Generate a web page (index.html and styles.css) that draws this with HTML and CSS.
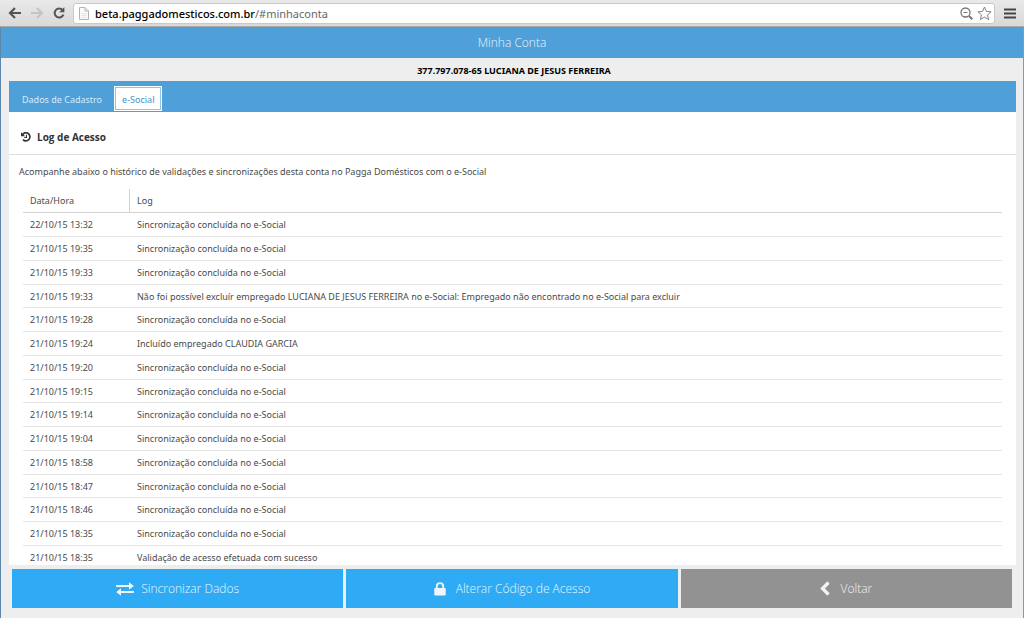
FILE: index.html
```html
<!DOCTYPE html>
<html lang="pt-BR">
<head>
<meta charset="utf-8">
<title>Minha Conta</title>
<link rel="stylesheet" href="styles.css">
</head>
<body>
<div class="browser">
  <nav class="toolbar" aria-label="Navegador">
    <button class="tool back" aria-label="Voltar página"><svg width="14" height="12" viewBox="0 0 14 12"><path d="M13 6H2M7 1L2 6l5 5" fill="none" stroke="currentColor" stroke-width="2.2"/></svg></button>
    <button class="tool forward" aria-label="Avançar página" disabled><svg width="14" height="12" viewBox="0 0 14 12"><path d="M1 6h11M7 1l5 5-5 5" fill="none" stroke="currentColor" stroke-width="2.2"/></svg></button>
    <button class="tool reload" aria-label="Recarregar"><svg width="12" height="12" viewBox="0 0 12 12"><path d="M9.6 3A4.5 4.5 0 1 0 10.4 7.6" fill="none" stroke="currentColor" stroke-width="2"/><path d="M11.4 0v5.2H6.2z" fill="currentColor"/></svg></button>
    <div class="address">
      <svg class="page-icon" width="10" height="13" viewBox="0 0 10 13"><path d="M.5.5h5.500l3.500 3.500v8.500h-9zM6 .5V4h3.500" fill="#fafafa" stroke="#b4b4b4"/><path d="M2.500 6.500h5M2.500 8.500h5M2.500 10.500h5" stroke="#e4e4e4"/></svg>
      <a class="url" href="#minhaconta"><span class="host">beta.paggadomesticos.com.br</span>/#minhaconta</a>
      <button class="tool small" aria-label="Zoom"><svg width="13" height="13" viewBox="0 0 13 13" fill="none" stroke="#777"><circle cx="5.500" cy="5.500" r="4.500" stroke-width="1.300"/><path d="M3.500 5.500h4"/><path d="M9 9l3.300 3.300" stroke-width="2"/></svg></button>
      <button class="tool small" aria-label="Favorito"><svg width="15" height="15" viewBox="0 0 15 15"><path d="M7.500 1l1.900 4.400 4.700.4-3.600 3.100 1.100 4.700-4.100-2.500-4.100 2.500 1.100-4.700L.9 5.800l4.700-.4z" fill="#fff" stroke="#858585"/></svg></button>
    </div>
    <button class="tool menu" aria-label="Menu"><svg width="12" height="11" viewBox="0 0 12 11"><path d="M0 1.500h12M0 5.500h12M0 9.500h12" stroke="currentColor" stroke-width="2"/></svg></button>
  </nav>
  <div class="app">
    <header class="title">Minha Conta</header>
    <div class="account">377.797.078-65 LUCIANA DE JESUS FERREIRA</div>
    <main class="panel">
      <div class="tabs" role="tablist">
        <button class="tab" role="tab" aria-selected="false">Dados de Cadastro</button>
        <button class="tab active" role="tab" aria-selected="true">e-Social</button>
      </div>
      <h1 class="section"><svg width="10" height="10" viewBox="0 0 9 9"><path d="M1.300 2.500A3.600 3.600 0 1 1 1.800 6.800" fill="none" stroke="currentColor" stroke-width="1.500"/><path d="M0 .2v3.700h3.700z" fill="currentColor"/><path d="M4.900 2.500v2.400H3" fill="none" stroke="currentColor"/></svg>Log de Acesso</h1>
      <p class="intro">Acompanhe abaixo o histórico de validações e sincronizações desta conta no Pagga Domésticos com o e-Social</p>
      <div class="log-area">
        <table class="log">
          <thead><tr><th class="when">Data/Hora</th><th>Log</th></tr></thead>
          <tbody>
            <tr><td>22/10/15 13:32</td><td>Sincronização concluída no e-Social</td></tr>
            <tr><td>21/10/15 19:35</td><td>Sincronização concluída no e-Social</td></tr>
            <tr><td>21/10/15 19:33</td><td>Sincronização concluída no e-Social</td></tr>
            <tr><td>21/10/15 19:33</td><td>Não foi possível excluír empregado LUCIANA DE JESUS FERREIRA no e-Social: Empregado não encontrado no e-Social para excluir</td></tr>
            <tr><td>21/10/15 19:28</td><td>Sincronização concluída no e-Social</td></tr>
            <tr><td>21/10/15 19:24</td><td>Incluído empregado CLAUDIA GARCIA</td></tr>
            <tr><td>21/10/15 19:20</td><td>Sincronização concluída no e-Social</td></tr>
            <tr><td>21/10/15 19:15</td><td>Sincronização concluída no e-Social</td></tr>
            <tr><td>21/10/15 19:14</td><td>Sincronização concluída no e-Social</td></tr>
            <tr><td>21/10/15 19:04</td><td>Sincronização concluída no e-Social</td></tr>
            <tr><td>21/10/15 18:58</td><td>Sincronização concluída no e-Social</td></tr>
            <tr><td>21/10/15 18:47</td><td>Sincronização concluída no e-Social</td></tr>
            <tr><td>21/10/15 18:46</td><td>Sincronização concluída no e-Social</td></tr>
            <tr><td>21/10/15 18:35</td><td>Sincronização concluída no e-Social</td></tr>
            <tr><td>21/10/15 18:35</td><td>Validação de acesso efetuada com sucesso</td></tr>
          </tbody>
        </table>
      </div>
    </main>
    <footer class="actions">
      <button class="action"><svg width="18" height="14" viewBox="0 0 18 14" fill="#f2f6f8"><path d="M0 3h13V.3L17.800 4 13 7.700V5H0z"/><path d="M18 11H5v2.700L.2 10 5 6.300V9h13z"/></svg>Sincronizar Dados</button>
      <button class="action lock"><svg width="12" height="14" viewBox="0 0 12 14"><path d="M2.800 6V4.400a3.200 3.200 0 0 1 6.400 0V6" fill="none" stroke="#f2f6f8" stroke-width="1.800"/><rect x=".3" y="6" width="11.400" height="7.600" rx=".8" fill="#f2f6f8"/></svg>Alterar Código de Acesso</button>
      <button class="action neutral"><svg width="10" height="15" viewBox="0 0 10 15"><path d="M8.500 1.500l-6 6 6 6" fill="none" stroke="#f4f4f4" stroke-width="3.200"/></svg>Voltar</button>
    </footer>
  </div>
</div>
</body>
</html>
```
FILE: styles.css
```css
* { box-sizing: border-box; }

body {
  margin: 0;
  font-family: "Noto Sans", "Open Sans", sans-serif;
  font-size: 9px;
  color: #4a4a4a;
}

button {
  font: inherit;
  border: 0;
  padding: 0;
  cursor: pointer;
}

.browser {
  height: 100vh;
  display: flex;
  flex-direction: column;
}

.toolbar {
  flex: none;
  height: 27px;
  display: flex;
  align-items: center;
  padding: 0 8px;
  background: linear-gradient(#e9e9e9, #d9d9d9);
  border-bottom: 1px solid #a9a9a9;
}

.tool {
  display: flex;
  background: none;
  color: #555;
}

.forward {
  margin-left: 8px;
  color: #c4c4c4;
}

.reload { margin-left: 9px; }

.address {
  flex: 1;
  height: 21px;
  display: flex;
  align-items: center;
  gap: 4px;
  margin: 0 9px 0 8px;
  padding: 0 2px 0 5px;
  background: #fff;
  border: 1px solid #c9c9c9;
  border-radius: 3px;
}

.url {
  flex: 1;
  margin-left: 2px;
  font-size: 11px;
  color: #666;
  text-decoration: none;
}

.host {
  color: #000;
  font-weight: 500;
}

.menu { color: #444; }

.app {
  flex: 1;
  min-height: 0;
  display: flex;
  flex-direction: column;
  background: #eee;
  border-left: 1px solid #5c87ad;
  border-right: 1px solid #5ea6d6;
}

.title {
  flex: none;
  line-height: 31px;
  background: #4f9fd8;
  color: #e8f6ff;
  font-family: "Open Sans", "Noto Sans", sans-serif;
  font-size: 12px;
  font-weight: 300;
  text-align: center;
}

.account {
  flex: none;
  padding: 1px 0 0 4px;
  height: 23px;
  line-height: 23px;
  color: #000;
  font-weight: 700;
  text-align: center;
}

.panel {
  flex: 1;
  min-height: 0;
  display: flex;
  flex-direction: column;
  margin: 0 7px 0 8px;
  background: #fff;
  overflow: hidden;
}

.tabs {
  flex: none;
  height: 31px;
  display: flex;
  align-items: flex-end;
  gap: 4px;
  padding: 0 5px 1px;
  background: #4f9fd8;
}

.tab {
  height: 25px;
  padding: 2px 7px 0;
  border: 1px solid transparent;
  background: none;
  color: #d5ecfa;
}

.active {
  background: #fff;
  border-color: #fff;
  outline: 1px solid #8fc3e8;
  outline-offset: -2px;
  color: #4b8fc2;
}

.section {
  flex: none;
  display: flex;
  align-items: center;
  gap: 6px;
  height: 43px;
  margin: 0;
  padding: 7px 12px 0;
  border-bottom: 1px solid #ddd;
  font-family: "Open Sans", "Noto Sans", sans-serif;
  font-size: 10px;
  color: #333;
}

.intro {
  flex: none;
  margin: 0;
  padding: 0 10px;
  line-height: 34px;
}

.log-area {
  flex: 1;
  min-height: 0;
  padding: 0 14px;
  overflow: hidden;
}

.log {
  width: 100%;
  table-layout: fixed;
  border-collapse: separate;
  border-spacing: 0;
}

.log th,
.log td {
  height: 24px;
  padding: 1px 7px 0;
  line-height: 20px;
  border-bottom: 1px solid #e5e5e5;
  font-weight: 400;
  text-align: left;
}

.log tr:nth-child(4n) td {
  height: 23px;
}

.log th {
  border-bottom-color: #d2d2d2;
}

.log .when {
  width: 107px;
  border-right: 1px solid #d2d2d2;
}

.actions {
  flex: none;
  display: grid;
  grid-template-columns: repeat(3, 1fr);
  gap: 3px;
  padding: 4px 11px 10px;
}

.action {
  height: 39px;
  display: flex;
  align-items: center;
  justify-content: center;
  gap: 7px;
  background: #2eabf4;
  color: #e8f7ff;
  font-family: "Open Sans", "Noto Sans", sans-serif;
  font-size: 12px;
  font-weight: 300;
}

.lock { gap: 10px; }

.neutral {
  gap: 10px;
  background: #929292;
  color: #f2f2f2;
}
```
